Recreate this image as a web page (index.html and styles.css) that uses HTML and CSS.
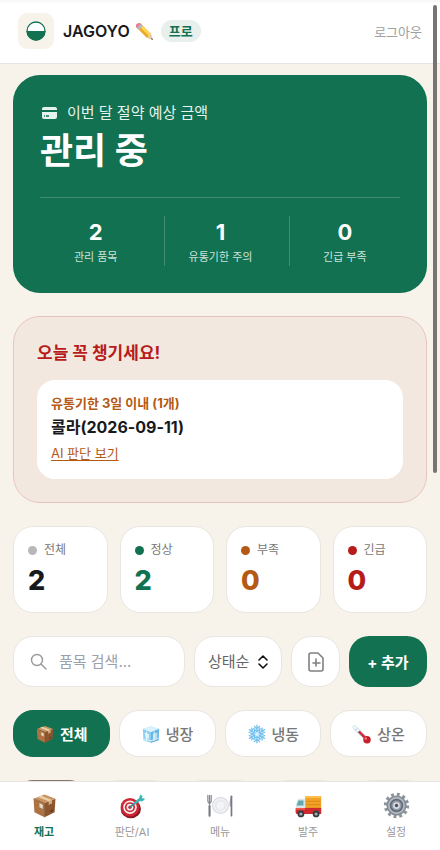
FILE: index.html
```html
<!DOCTYPE html>
<html lang="ko">
	<head>
		<meta charset="UTF-8">
		<meta name="viewport" content="width=device-width, initial-scale=1">
		<title>JAGOYO</title>
		<link rel="stylesheet" href="styles.css">
	</head>
	<body>
		<svg class="sprite" aria-hidden="true">
			<symbol id="i-box" viewBox="0 0 32 32">
				<path d="M3 8L16 13V30L4 24Z" fill="#ad7344"/>
				<path d="M16 13L29 8L28 24L16 30Z" fill="#8d562f"/>
				<path d="M3 8L16 3L29 8L16 13Z" fill="#c99261"/>
				<path d="M8 6L12 4.500L25 9.500L21 11Z" fill="#ead0ac"/>
				<path d="M21 11L25 9.500V14L23 14L21 16Z" fill="#d5b084"/>
				<path d="M10 13L14 15V20L10 18Z" fill="#e5d7c4"/>
				<path d="M23 22L26 20.500V22.500L23 24Z" fill="#5f341a"/>
				<path d="M3 8L16 13V30" fill="none" stroke="#744521" stroke-width=".6"/>
			</symbol>
			<symbol id="i-ice" viewBox="0 0 32 32">
				<path d="M3 8L16 4L29 8L28 26L16 30L4 26Z" fill="#8bcdf0"/>
				<path d="M3 8L16 4L29 8L16 13Z" fill="#d9f2fd"/>
				<path d="M16 13L29 8L28 26L16 30Z" fill="#68b3e3"/>
				<path d="M6 14L13 16V24L7 22Z" fill="#d7f1fc"/>
				<path d="M19 16L26 13V22L19 25Z" fill="#b3e1f8"/>
				<path d="M9 12V27M21 12V27M5 24L16 27L27 23" fill="none" stroke="#ebfaff" stroke-width="1.500"/>
			</symbol>
			<symbol id="i-snow" viewBox="0 0 32 32">
				<g fill="none" stroke="#78c3ee" stroke-width="2.200" stroke-linecap="round">
					<g id="flake-arm"><path d="M16 16V2M12 4L16 8L20 4M11 8L16 12L21 8"/></g>
					<use href="#flake-arm" transform="rotate(60 16 16)"/>
					<use href="#flake-arm" transform="rotate(120 16 16)"/>
					<use href="#flake-arm" transform="rotate(180 16 16)"/>
					<use href="#flake-arm" transform="rotate(240 16 16)"/>
					<use href="#flake-arm" transform="rotate(300 16 16)"/>
				</g>
				<circle cx="16" cy="16" r="3" fill="#d8f1ff"/>
			</symbol>
			<symbol id="i-thermo" viewBox="0 0 32 32">
				<path d="M4 5L22 23" stroke="#c5dbe4" stroke-width="6" stroke-linecap="round"/>
				<path d="M4 5L22 23" stroke="#f4fbff" stroke-width="4" stroke-linecap="round"/>
				<path d="M12 13L24 25" stroke="#d42532" stroke-width="4" stroke-linecap="round"/>
				<path d="M5 10L8 7M9 14L12 11M13 18L16 15" stroke="#7ba4b5" stroke-width="1"/>
				<circle cx="24" cy="25" r="6" fill="#c91f2d"/>
				<circle cx="22" cy="23" r="2" fill="#f17a80"/>
			</symbol>
			<symbol id="i-target" viewBox="0 0 32 32">
				<ellipse cx="14" cy="20" rx="12" ry="11" fill="#8d1722"/>
				<ellipse cx="13" cy="18" rx="11" ry="11" fill="#cf2635"/>
				<ellipse cx="13" cy="18" rx="8" ry="8" fill="#f5eeee"/>
				<ellipse cx="13" cy="18" rx="6" ry="6" fill="#cf2635"/>
				<ellipse cx="13" cy="18" rx="4" ry="4" fill="#f5eeee"/>
				<circle cx="13" cy="18" r="2" fill="#cf2635"/>
				<path d="M13 18L24 9" stroke="#2b8f91" stroke-width="2"/>
				<path d="M18 12L24 7L25 3L28 5L27 7L31 8L28 11L24 11L19 15Z" fill="#3db5b2"/>
			</symbol>
			<symbol id="i-plate" viewBox="0 0 32 32">
				<circle cx="16" cy="16" r="10" fill="#d5d6de"/>
				<circle cx="16" cy="16" r="9" fill="#efeff4"/>
				<circle cx="16" cy="16" r="6" fill="#dfe0e6"/>
				<circle cx="16" cy="16" r="5" fill="#f4f4f7"/>
				<path d="M1 4V10Q1 13 3 13V28M5 4V10Q5 13 3 13M3 4V12" fill="none" stroke="#84868f" stroke-width="1.400" stroke-linecap="round"/>
				<path d="M3 17V28" stroke="#777984" stroke-width="2.400" stroke-linecap="round"/>
				<path d="M29 4Q26 9 27 17H29Z" fill="#a9abb4"/>
				<path d="M29 5V28" stroke="#777984" stroke-width="2" stroke-linecap="round"/>
			</symbol>
			<symbol id="i-truck" viewBox="0 0 32 32">
				<path d="M12 5H31V22H12Z" fill="#f2a326"/>
				<path d="M12 5H31V7H12Z" fill="#ffc34c"/>
				<path d="M13 11H30M13 15H30M13 19H30" stroke="#d98417" stroke-width="1"/>
				<path d="M3 9Q4 8 5 8H12V21H1V16Z" fill="#d9e5e6"/>
				<path d="M4 10H10V16H2Z" fill="#61a8b0"/>
				<path d="M1 19H31V26H2Q0 26 1 19Z" fill="#cf292d"/>
				<path d="M1 19H12V21H1Z" fill="#ed5750"/>
				<circle cx="7" cy="26" r="4" fill="#373c42"/>
				<circle cx="25" cy="26" r="4" fill="#373c42"/>
				<circle cx="7" cy="26" r="1.800" fill="#a8adb1"/>
				<circle cx="25" cy="26" r="1.800" fill="#a8adb1"/>
			</symbol>
			<symbol id="i-gear" viewBox="0 0 32 32">
				<circle cx="16" cy="16" r="13" fill="none" stroke="#8d949d" stroke-width="4" stroke-dasharray="3.400 3.407"/>
				<circle cx="16" cy="16" r="12" fill="#858d97"/>
				<circle cx="16" cy="16" r="10" fill="#b2b9c0"/>
				<circle cx="16" cy="16" r="8" fill="#626b77"/>
				<circle cx="16" cy="16" r="6" fill="#949ca7"/>
				<circle cx="16" cy="16" r="4" fill="#d8dce1"/>
				<circle cx="16" cy="16" r="2" fill="#4a515c"/>
			</symbol>
		</svg>

		<div class="app">
			<header class="topbar">
				<span class="logo">
					<svg width="20" height="20" viewBox="0 0 20 20" aria-hidden="true">
						<circle cx="10" cy="10" r="9" fill="#fff" stroke="#117150" stroke-width="1.300"/>
						<path d="M.5 10H19.500A9.500 9.500 0 0 1 .5 10Z" fill="#117150"/>
					</svg>
				</span>
				<h1 class="brand">JAGOYO</h1>
				<button class="edit" type="button" aria-label="이름 수정">
					<svg width="18" height="18" viewBox="0 0 18 18" aria-hidden="true">
						<path d="M5 1L16 12L12 16L1 5Z" fill="#e9a92a"/>
						<path d="M5 1L16 12L14 14L3 3Z" fill="#ffd552"/>
						<path d="M5 1L7 3L3 7L1 5Q0 1 5 1Z" fill="#e58096"/>
						<path d="M6 2L8 4L4 8L2 6Z" fill="#b7bbc0"/>
						<path d="M16 12L18 18L12 16Z" fill="#e9c9a0"/>
						<path d="M17 16L18 18L16 17Z" fill="#333"/>
					</svg>
				</button>
				<span class="plan">프로</span>
				<button class="logout" type="button">로그아웃</button>
			</header>

			<main class="content">
				<section class="hero">
					<p class="hero-label">
						<svg width="15" height="12" viewBox="0 0 15 12" aria-hidden="true">
							<path d="M2 0H13Q15 0 15 2V3H0V2Q0 0 2 0ZM0 5H15V10Q15 12 13 12H2Q0 12 0 10Z" fill="#e6f2ed"/>
							<path d="M2 9H3M4 9H7" stroke="#117150" stroke-width="1.500"/>
						</svg>
						이번 달 절약 예상 금액
					</p>
					<p class="hero-value">관리 중</p>
					<dl class="hero-stats">
						<div><dt>관리 품목</dt><dd>2</dd></div>
						<div><dt>유통기한 주의</dt><dd>1</dd></div>
						<div><dt>긴급 부족</dt><dd>0</dd></div>
					</dl>
				</section>

				<section class="alert">
					<h2>오늘 꼭 챙기세요!</h2>
					<div class="alert-card">
						<p class="alert-kind">유통기한 3일 이내 (1개)</p>
						<p class="alert-item">콜라(2026-09-11)</p>
						<a href="#ai">AI 판단 보기</a>
					</div>
				</section>

				<dl class="counts">
					<div class="count"><dt>전체</dt><dd>2</dd></div>
					<div class="count ok"><dt>정상</dt><dd>2</dd></div>
					<div class="count low"><dt>부족</dt><dd>0</dd></div>
					<div class="count urgent"><dt>긴급</dt><dd>0</dd></div>
				</dl>

				<div class="tools">
					<label class="search">
						<svg width="17" height="17" viewBox="0 0 17 17" fill="none" stroke="#999" stroke-width="1.400" stroke-linecap="round" aria-hidden="true">
							<circle cx="7" cy="7" r="5.500"/><path d="M11 11L16 16"/>
						</svg>
						<input type="search" placeholder="품목 검색..." aria-label="품목 검색">
					</label>
					<div class="sort">
						<select aria-label="정렬"><option>상태순</option></select>
						<svg width="10" height="14" viewBox="0 0 10 14" fill="none" stroke="#111" stroke-width="1.600" stroke-linecap="round" stroke-linejoin="round" aria-hidden="true">
							<path d="M1 5L5 1L9 5M1 9L5 13L9 9"/>
						</svg>
					</div>
					<button class="import" type="button" aria-label="파일 추가">
						<svg width="16" height="20" viewBox="0 0 16 20" fill="none" stroke="#808080" stroke-width="1.600" stroke-linecap="round" stroke-linejoin="round" aria-hidden="true">
							<path d="M3 1H10L15 6V17Q15 19 13 19H3Q1 19 1 17V3Q1 1 3 1ZM8 7V14M5 11H12"/>
						</svg>
					</button>
					<button class="add" type="button">+ 추가</button>
				</div>

				<div class="chips">
					<button class="chip active" type="button"><svg aria-hidden="true"><use href="#i-box"/></svg>전체</button>
					<button class="chip" type="button"><svg aria-hidden="true"><use href="#i-ice"/></svg>냉장</button>
					<button class="chip" type="button"><svg aria-hidden="true"><use href="#i-snow"/></svg>냉동</button>
					<button class="chip" type="button"><svg aria-hidden="true"><use href="#i-thermo"/></svg>상온</button>
				</div>

				<div class="groups">
					<span class="group active"></span>
					<span class="group"></span>
					<span class="group"></span>
					<span class="group"></span>
					<span class="group"></span>
				</div>
			</main>

			<nav class="tabs">
				<a class="tab active" href="#stock"><svg aria-hidden="true"><use href="#i-box"/></svg>재고</a>
				<a class="tab" href="#ai"><svg aria-hidden="true"><use href="#i-target"/></svg>판단/AI</a>
				<a class="tab" href="#menu"><svg aria-hidden="true"><use href="#i-plate"/></svg>메뉴</a>
				<a class="tab" href="#order"><svg aria-hidden="true"><use href="#i-truck"/></svg>발주</a>
				<a class="tab" href="#settings"><svg aria-hidden="true"><use href="#i-gear"/></svg>설정</a>
			</nav>
			<div class="scroll-thumb"></div>
		</div>
	</body>
</html>
```

FILE: styles.css
```css
*{
	box-sizing: border-box;
}
body,h1,h2,p,dl,dd{
	margin: 0;
}
body{
	background-color: #f7f3eb;
	color: #17191c;
	font-family: Inter, "Noto Sans CJK KR", sans-serif;
	font-size: 15px;
}
button,input,select{
	font: inherit;
	color: inherit;
	margin: 0;
	padding: 0;
	border: 0;
	background: none;
}
button{
	cursor: pointer;
}
svg{
	flex-shrink: 0;
}
.sprite{
	position: absolute;
	width: 0;
	height: 0;
}
.app{
	position: relative;
	height: 100vh;
	display: flex;
	flex-direction: column;
}

/* header */
.topbar{
	display: flex;
	align-items: center;
	flex-shrink: 0;
	padding: 13px 18px 14px;
	background: linear-gradient(#f6f6f6, #fff 4px);
	border-bottom: 1px solid #e4e4e4;
}
.logo{
	display: flex;
	align-items: center;
	justify-content: center;
	width: 36px;
	height: 36px;
	border-radius: 9px;
	background-color: #f7f3eb;
}
.brand{
	margin-left: 9px;
	font-size: 16px;
	font-weight: 600;
	line-height: 24px;
}
.edit{
	display: flex;
	margin-left: 5px;
}
.plan{
	margin-left: 8px;
	padding: 0 8px;
	border-radius: 12px;
	background-color: #e7f0ec;
	color: #117150;
	font-size: 13px;
	font-weight: 700;
	line-height: 22px;
}
.logout{
	margin-left: auto;
	color: #a0a0a0;
	font-size: 13px;
}

/* content */
.content{
	flex: 1;
	min-height: 0;
	display: flex;
	flex-direction: column;
	gap: 23px;
	padding: 11px 13px 0;
	overflow-y: auto;
	scrollbar-width: none;
}
.content > *{
	flex-shrink: 0;
}
.hero{
	padding: 26px 27px 27px;
	border-radius: 27px;
	background-color: #117150;
	color: #fff;
}
.hero-label{
	display: flex;
	align-items: center;
	gap: 10px;
	padding-left: 2px;
	color: #e6f2ed;
	line-height: 24px;
}
.hero-value{
	font-size: 36px;
	font-weight: 700;
	line-height: 52px;
}
.hero-stats{
	display: grid;
	grid-template-columns: repeat(3, 1fr);
	gap: 13px;
	margin-top: 20px;
	padding-top: 18px;
	border-top: 1px solid #418d73;
}
.hero-stats div{
	display: flex;
	flex-direction: column-reverse;
	text-align: center;
}
.hero-stats div + div{
	border-left: 1px solid #418d73;
}
.hero-stats dt{
	color: #cfe3dc;
	font-size: 11px;
	line-height: 18px;
}
.hero-stats dd{
	font-size: 22px;
	font-weight: 700;
	line-height: 32px;
}

.alert{
	padding: 23px;
	border: 1px solid #e8c4bf;
	border-radius: 27px;
	background-color: #f3e8df;
}
.alert h2{
	color: #b71c1c;
	font-size: 17px;
	font-weight: 700;
	line-height: 26px;
}
.alert-card{
	margin-top: 14px;
	padding: 13px 14px;
	border-radius: 18px;
	background-color: #fff;
}
.alert-kind{
	color: #b45a14;
	font-size: 13px;
	font-weight: 700;
	line-height: 20px;
}
.alert-item{
	font-size: 16px;
	font-weight: 700;
	line-height: 28px;
}
.alert-card a{
	display: block;
	color: #b45a14;
	font-size: 13px;
	line-height: 25px;
	text-underline-offset: 2px;
}

.counts{
	display: grid;
	grid-template-columns: repeat(4, 1fr);
	gap: 12px;
}
.count{
	padding: 14px 14px 13px;
	border: 1px solid #e9e6e1;
	border-radius: 20px;
	background-color: #fff;
}
.count dt{
	display: flex;
	align-items: center;
	gap: 7px;
	color: #777;
	font-size: 12px;
	line-height: 18px;
}
.count dt::before{
	content: "";
	width: 9px;
	height: 9px;
	border-radius: 50%;
	background-color: #b8b8b8;
}
.count dd{
	margin-top: 4px;
	font-size: 27px;
	font-weight: 800;
	line-height: 36px;
}
.ok dd{
	color: #117150;
}
.ok dt::before{
	background-color: #117150;
}
.low dd{
	color: #b45a14;
}
.low dt::before{
	background-color: #b45a14;
}
.urgent dd{
	color: #b71c1c;
}
.urgent dt::before{
	background-color: #b71c1c;
}

/* search row */
.tools{
	display: flex;
	gap: 9px;
	height: 51px;
}
.search,.sort,.import,.chip{
	display: flex;
	align-items: center;
	border: 1px solid #e9e6e1;
	border-radius: 20px;
	background-color: #fff;
}
.search{
	flex: 1;
	min-width: 0;
	gap: 12px;
	padding: 0 16px;
}
.search input{
	flex: 1;
	min-width: 0;
	outline: none;
	appearance: none;
}
.search input::placeholder{
	color: #9ca0aa;
}
.sort{
	gap: 8px;
	padding: 0 13px;
	color: #666;
}
.sort select{
	appearance: none;
	outline: none;
}
.import{
	justify-content: center;
	width: 49px;
}
.add{
	width: 78px;
	border-radius: 20px;
	background-color: #117150;
	color: #fff;
	font-weight: 700;
}

.chips{
	display: grid;
	grid-template-columns: repeat(4, 1fr);
	gap: 9px;
}
.chip{
	justify-content: center;
	gap: 5px;
	height: 47px;
	color: #777;
	font-weight: 500;
}
.chip svg{
	width: 20px;
	height: 20px;
}
.chip.active{
	border-color: #117150;
	background-color: #117150;
	color: #fff;
	font-weight: 700;
}
.groups{
	display: grid;
	grid-template-columns: repeat(5, 1fr);
	gap: 9px;
}
.group{
	height: 40px;
	border: 1px solid #e9e6e1;
	border-radius: 20px;
	background-color: #fff;
}
.group.active{
	border-color: #85766e;
	background-color: #85766e;
}

/* bottom tabs */
.tabs{
	display: grid;
	grid-template-columns: repeat(5, 1fr);
	flex-shrink: 0;
	height: 69px;
	padding-top: 10px;
	border-top: 1px solid #e9e6e1;
	background-color: #fff;
}
.tab{
	display: flex;
	flex-direction: column;
	align-items: center;
	gap: 4px;
	color: #999;
	font-size: 11px;
	line-height: 18px;
	text-decoration: none;
}
.tab svg{
	width: 27px;
	height: 27px;
}
.tab.active{
	color: #117150;
	font-weight: 700;
}
.scroll-thumb{
	position: absolute;
	top: 5px;
	right: 3px;
	width: 4px;
	height: 55%;
	border-radius: 2px;
	background-color: #777572;
}
```
